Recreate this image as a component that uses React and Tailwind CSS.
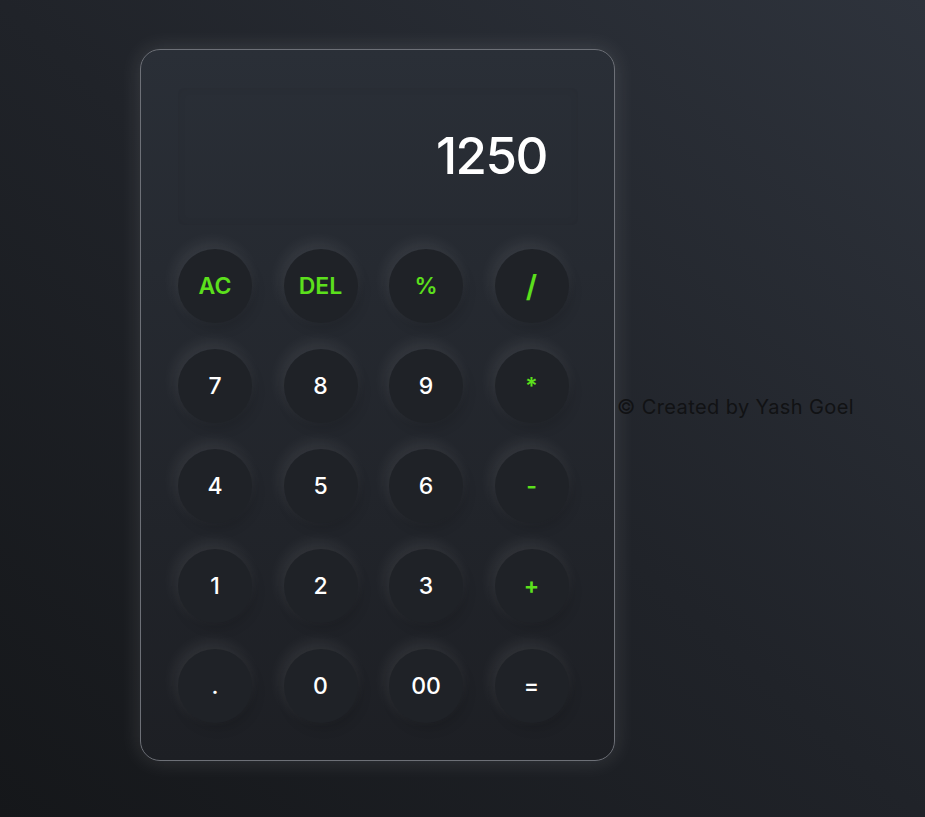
const keys = [
  { label: 'AC', op: true },
  { label: 'DEL', op: true },
  { label: '%', op: true },
  { label: '/', op: true, big: true },
  { label: '7' },
  { label: '8' },
  { label: '9' },
  { label: '*', op: true },
  { label: '4' },
  { label: '5' },
  { label: '6' },
  { label: '-', op: true },
  { label: '1' },
  { label: '2' },
  { label: '3' },
  { label: '+', op: true },
  { label: '.' },
  { label: '0' },
  { label: '00' },
  { label: '=' },
]

function Key({ label, op, big }) {
  return (
    <button
      className={`flex h-[74px] w-[74px] items-center justify-center rounded-full bg-[#1f2227] shadow-[-3px_-6px_16px_rgba(255,255,255,0.085),3px_6px_12px_rgba(0,0,0,0.12)] ${
        op ? 'font-semibold text-[#5ce01c]' : 'font-medium text-white'
      } ${big ? 'text-[30px]' : 'text-[23px]'}`}
    >
      {label}
    </button>
  )
}

export default function App() {
  return (
    <div className="flex min-h-[817px] items-center bg-gradient-to-tr from-[#15171a] via-[#202329] to-[#2e333c] pl-[140px] pb-[7px] font-['Inter','Noto_Sans',sans-serif]">
      {/* Calculator */}
      <div className="flex h-[712px] w-[475px] flex-col rounded-[20px] border border-[#6d7077] bg-gradient-to-b from-[#2a2f37] to-[#1d1f24] px-[37px] pt-[38px] shadow-[0_0_22px_rgba(255,255,255,0.12)]">
        <div className="flex h-[137px] w-[400px] items-center justify-end rounded-md pr-[31px] shadow-[inset_0_0_10px_rgba(0,0,0,0.06)]">
          <span className="text-[51px] font-medium tracking-[-1.5px] text-white">1250</span>
        </div>
        <div className="mt-[24px] grid w-[391px] grid-cols-4 gap-x-[31px] gap-y-[26px]">
          {keys.map((k) => (
            <Key key={k.label} {...k} />
          ))}
        </div>
      </div>

      {/* Credit */}
      <p className="ml-[2px] mt-[4px] text-[20px] tracking-[0.4px] text-[#111214]">© Created by Yash Goel</p>
    </div>
  )
}
